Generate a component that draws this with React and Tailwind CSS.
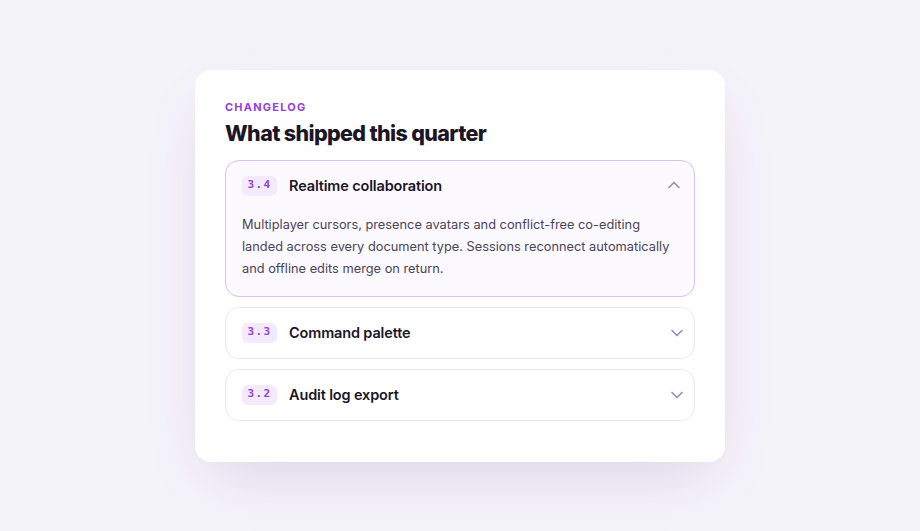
import { ChevronDown, ChevronUp } from 'lucide-react';

const items = [
  {
    version: '3.4',
    title: 'Realtime collaboration',
    open: true,
    body: 'Multiplayer cursors, presence avatars and conflict-free co-editing landed across every document type. Sessions reconnect automatically and offline edits merge on return.',
  },
  { version: '3.3', title: 'Command palette', open: false },
  { version: '3.2', title: 'Audit log export', open: false },
];

function Item({ item }) {
  return (
    <div
      className={
        item.open
          ? 'rounded-[14px] border border-[#d6c2f3] bg-[#fcfaff] px-4 pt-[14px] pb-4'
          : 'rounded-[14px] border border-[#ebe6f3] bg-white px-4 py-[14px]'
      }
    >
      <div className="flex items-center">
        <span className="flex h-5 w-[35px] items-center justify-center rounded-md bg-[#f3eafd] font-['DejaVu_Sans_Mono',monospace] text-[11px] font-bold tracking-[0.12em] text-[#9340e0]">
          {item.version}
        </span>
        <span className="ml-3 text-[14.5px] leading-[22px] font-semibold tracking-[-0.01em] text-[#1c1526]">
          {item.title}
        </span>
        {item.open ? (
          <ChevronUp className="-mr-[6px] ml-auto h-5 w-5 -translate-y-[1px] text-[#9a8db6]" strokeWidth={2} />
        ) : (
          <ChevronDown className="-mr-[9px] ml-auto h-5 w-5 text-[#9a8db6]" strokeWidth={2} />
        )}
      </div>
      {item.open && (
        <p className="mt-[17px] text-[12.8px] leading-[22px] text-[#4b4358]">{item.body}</p>
      )}
    </div>
  );
}

export default function App() {
  return (
    <div className="flex min-h-screen items-center justify-center bg-[#f5f3fa] font-['Inter',sans-serif]">
      <div className="w-[530px] rounded-2xl bg-white px-[30px] pt-[29px] pb-[41px] shadow-[0_24px_60px_-16px_rgba(70,40,130,0.16)]">
        <div className="text-[11px] leading-4 font-bold tracking-[0.11em] text-[#9340e0]">CHANGELOG</div>
        <h1 className="mt-[4px] text-[21.5px] leading-7 font-extrabold tracking-[-0.03em] text-[#1c1526]">
          What shipped this quarter
        </h1>
        <div className="mt-[13px] flex flex-col gap-[10px]">
          {items.map((it) => (
            <Item key={it.version} item={it} />
          ))}
        </div>
      </div>
    </div>
  );
}
